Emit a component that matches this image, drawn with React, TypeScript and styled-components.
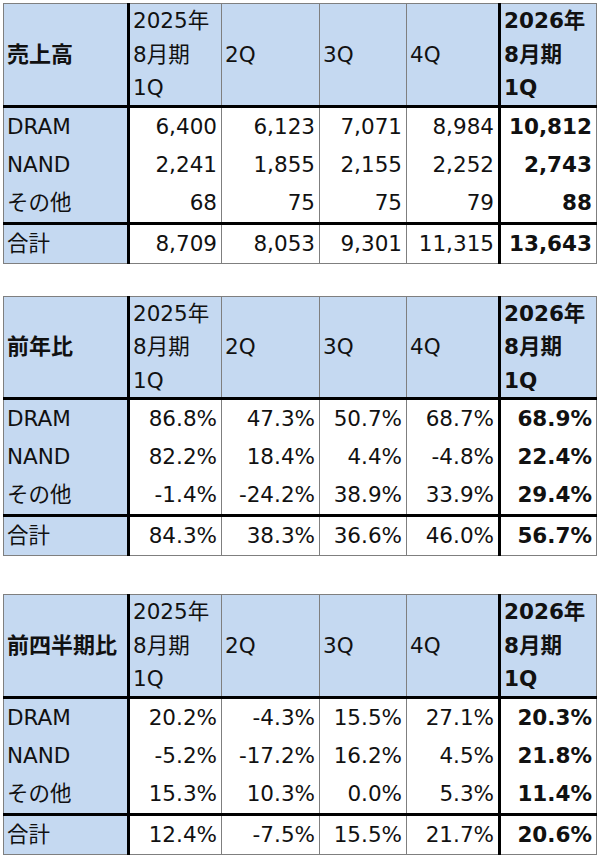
import React from "react";
import styled, { createGlobalStyle } from "styled-components";

const GlobalStyle = createGlobalStyle`
    html, body {
        margin: 0;
        padding: 0;
        background: #ffffff;
    }
    body {
        font-family: "DejaVu Sans", "Noto Sans CJK JP", sans-serif;
        color: #111111;
    }
`;

const BLUE = "#c5d9f1";
const THIN = "1px solid #7f7f7f";
const THICK = "3px solid #000000";

interface Block {
    title: string;
    rows: string[][];
    gap: number;
}

const blocks: Block[] = [
    {
        title: "売上高",
        gap: 3,
        rows: [
            ["DRAM", "6,400", "6,123", "7,071", "8,984", "10,812"],
            ["NAND", "2,241", "1,855", "2,155", "2,252", "2,743"],
            ["その他", "68", "75", "75", "79", "88"],
            ["合計", "8,709", "8,053", "9,301", "11,315", "13,643"],
        ],
    },
    {
        title: "前年比",
        gap: 32,
        rows: [
            ["DRAM", "86.8%", "47.3%", "50.7%", "68.7%", "68.9%"],
            ["NAND", "82.2%", "18.4%", "4.4%", "-4.8%", "22.4%"],
            ["その他", "-1.4%", "-24.2%", "38.9%", "33.9%", "29.4%"],
            ["合計", "84.3%", "38.3%", "36.6%", "46.0%", "56.7%"],
        ],
    },
    {
        title: "前四半期比",
        gap: 38,
        rows: [
            ["DRAM", "20.2%", "-4.3%", "15.5%", "27.1%", "20.3%"],
            ["NAND", "-5.2%", "-17.2%", "16.2%", "4.5%", "21.8%"],
            ["その他", "15.3%", "10.3%", "0.0%", "5.3%", "11.4%"],
            ["合計", "12.4%", "-7.5%", "15.5%", "21.7%", "20.6%"],
        ],
    },
];

const widths = [125, 93, 98, 87, 93, 97];

const Page = styled.div`
    padding: 0 0 0 3px;
    width: 600px;
    box-sizing: border-box;
`;

const Sheet = styled.table<{ $gap: number }>`
    border-collapse: collapse;
    table-layout: fixed;
    width: 594px;
    margin-top: ${(p) => p.$gap}px;
    font-size: 21.5px;
    border: ${THIN};
`;

const HeadCell = styled.th<{ $bold?: boolean; $label?: boolean; $last?: boolean }>`
    background: ${BLUE};
    text-align: left;
    vertical-align: middle;
    font-weight: ${(p) => (p.$bold ? 700 : 400)};
    font-size: ${(p) => (p.$label ? "22px" : "inherit")};
    line-height: 33.5px;
    height: 100px;
    padding: 0 0 0 3px;
    border-left: ${(p) => (p.$last ? THICK : THIN)};
    border-right: ${(p) => (p.$label ? THICK : THIN)};
    border-bottom: ${THICK};
    white-space: nowrap;
`;

const LabelCell = styled.td<{ $total?: boolean }>`
    background: ${BLUE};
    text-align: left;
    padding: 0 0 0 3px;
    height: 38px;
    line-height: 38px;
    border-right: ${THICK};
    border-top: ${(p) => (p.$total ? THICK : "none")};
    white-space: nowrap;
`;

const ValueCell = styled.td<{ $total?: boolean; $last?: boolean }>`
    background: #ffffff;
    text-align: right;
    padding: 0 4px 0 0;
    height: 38px;
    line-height: 38px;
    font-weight: ${(p) => (p.$last ? 700 : 400)};
    border-left: ${(p) => (p.$last ? THICK : THIN)};
    border-right: ${THIN};
    border-top: ${(p) => (p.$total ? THICK : "none")};
    white-space: nowrap;
`;

const SalesTable = ({ block }: { block: Block }) => (
    <Sheet $gap={block.gap}>
        <colgroup>
            {widths.map((w, i) => (
                <col key={i} style={{ width: w }} />
            ))}
        </colgroup>
        <thead>
            <tr>
                <HeadCell $bold $label>
                    {block.title}
                </HeadCell>
                <HeadCell>
                    2025年
                    <br />
                    8月期
                    <br />
                    1Q
                </HeadCell>
                <HeadCell>2Q</HeadCell>
                <HeadCell>3Q</HeadCell>
                <HeadCell>4Q</HeadCell>
                <HeadCell $bold $last>
                    2026年
                    <br />
                    8月期
                    <br />
                    1Q
                </HeadCell>
            </tr>
        </thead>
        <tbody>
            {block.rows.map((row, r) => {
                const total = r === block.rows.length - 1;
                return (
                    <tr key={row[0]}>
                        <LabelCell $total={total}>{row[0]}</LabelCell>
                        {row.slice(1).map((v, i) => (
                            <ValueCell key={i} $total={total} $last={i === 4}>
                                {v}
                            </ValueCell>
                        ))}
                    </tr>
                );
            })}
        </tbody>
    </Sheet>
);

const App = () => (
    <>
        <GlobalStyle />
        <Page>
            {blocks.map((b) => (
                <SalesTable key={b.title} block={b} />
            ))}
        </Page>
    </>
);

export default App;
